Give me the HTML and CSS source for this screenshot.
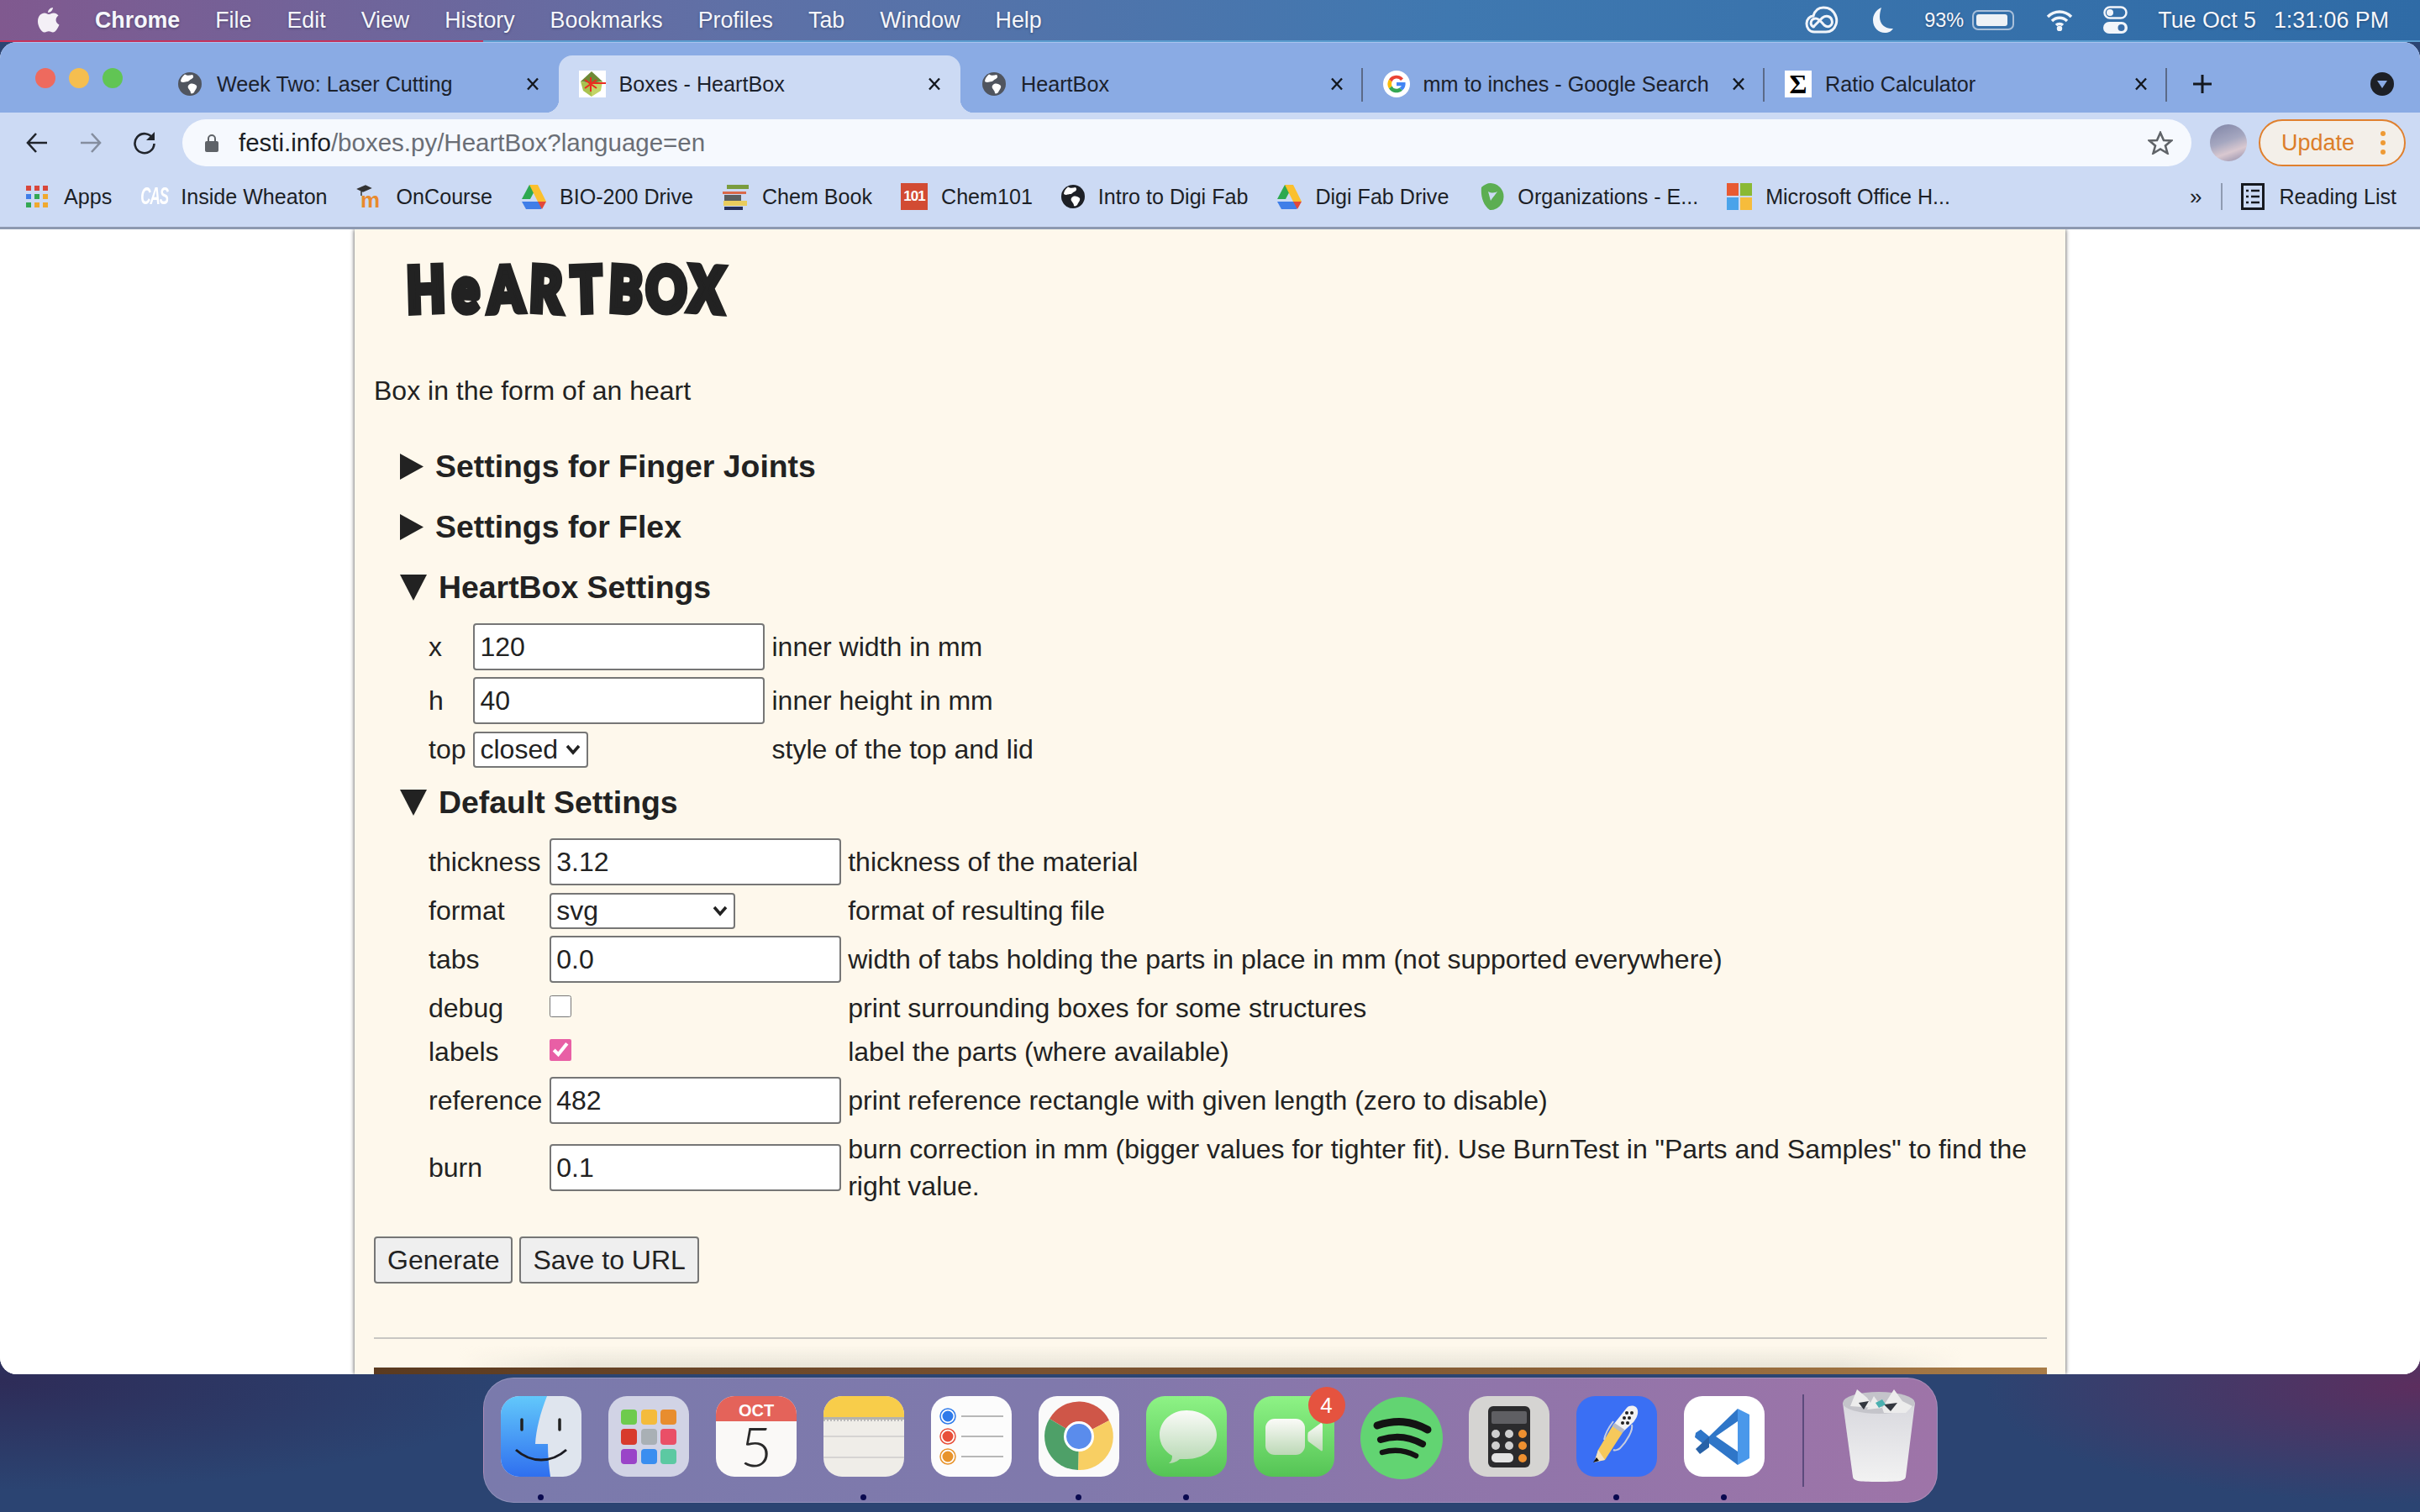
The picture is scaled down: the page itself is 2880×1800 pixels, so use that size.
FILE: index.html
```html
<!DOCTYPE html>
<html lang="en">
<head>
<meta charset="UTF-8">
<title>Boxes - HeartBox</title>
<link rel="stylesheet" href="styles.css">
</head>
<body>
<svg class="defs" aria-hidden="true">
  <symbol id="globe" viewBox="0 0 28 28">
    <circle cx="14" cy="14" r="14" fill="currentColor"/>
    <path d="M8 2.500c3 2 6 1 9 .5 2 2 1 4-1 5-3 1-3 3-5 3S6 13 3 11c0-3 2-6 5-8.500zM14 14c3-1 6 0 8 2 1 3-2 5-3 8-1 1-3 2-4 1 0-3-2-4-3-6-1-2 0-4 2-5z" fill="#fff"/>
  </symbol>
  <symbol id="drive" viewBox="0 0 30 32">
    <polygon points="10,2 20,2 11,19 1,19" fill="#2da94f"/>
    <polygon points="10,2 20,2 30,22 20,22" fill="#fbc02d"/>
    <polygon points="1,22 29,22 24,31 6,31" fill="#3f7ee8"/>
    <polygon points="20,22 30,22 25,31" fill="#e2483a"/>
  </symbol>
  <symbol id="close" viewBox="0 0 18 16">
    <path d="M3 1.500l12 13M15 1.500l-12 13" stroke="#14181f" stroke-width="2.400" fill="none"/>
  </symbol>
</svg>

<header class="menubar">
  <svg class="apple" width="26" height="32" viewBox="0 0 26 32"><path d="M18 1c0 3-3 6-6 6 0-3 3-6 6-6zM13 9c2 0 3-1.500 6-1.500 2 0 4 1 5.500 3-4.500 3-3.500 9 1 11-1.500 4-4.500 9-7.500 9-2 0-3-1.200-5-1.200s-3 1.200-5 1.200C4 30.500 0 23 0 17.500 0 11 4 7.500 8 7.500c2 0 3.500 1.500 5 1.500z" fill="#f4f0f6"/></svg>
  <span class="menu-app">Chrome</span>
  <span>File</span><span>Edit</span><span>View</span><span>History</span><span>Bookmarks</span><span>Profiles</span><span>Tab</span><span>Window</span><span>Help</span>
  <div class="status">
    <svg width="40" height="34" viewBox="0 0 40 34" fill="none" stroke="#f2f5fa" stroke-width="3"><path d="M11 31C5 31 2 26 2 21c0-5 4-9 8-9 2-7 7-10 12-10 8 0 13 5 15 11 1 3 1 6 0 9-2 6-6 9-12 9z"/><path d="M10 25c-5-3-3-10 3-10 4 0 7 5 10 8 5 4 11 0 9-6-1-5-7-6-11-3l-9 9c-2 2-1 2-2 2z"/></svg>
    <svg width="26" height="32" viewBox="0 0 26 32"><path d="M11 1C4 4 1 10 1 16c0 9 7 15 14 15 5 0 8-2 10-5-9 1-16-5-16-14 0-4 1-8 2-11z" fill="#f2f5fa"/></svg>
    <div class="battery-wrap">
      <span class="percent">93%</span>
      <span class="battery"><span class="battery-fill"></span></span>
    </div>
    <svg width="32" height="26" viewBox="0 0 32 26" fill="none" stroke="#f2f5fa" stroke-width="3.500"><path d="M2 9c8-8 20-8 28 0M7 14c5-5 13-5 18 0M12 19c2-2 6-2 8 0"/><circle cx="16" cy="23" r="1.500" fill="#f2f5fa"/></svg>
    <svg width="29" height="34" viewBox="0 0 29 34"><rect x="1.500" y="1.500" width="26" height="13" rx="6.500" fill="none" stroke="#f2f5fa" stroke-width="2.500"/><circle cx="8" cy="8" r="4" fill="#f2f5fa"/><rect y="19" width="29" height="14" rx="7" fill="#f2f5fa"/><circle cx="21.500" cy="26" r="4" fill="#3a6ea8"/></svg>
    <span class="clock"><span class="clock-date">Tue Oct 5</span>1:31:06 PM</span>
  </div>
</header>

<div class="window">
  <div class="tabstrip">
    <div class="lights"><i class="light red"></i><i class="light yellow"></i><i class="light green"></i></div>
    <div class="tab">
      <span class="favicon"><svg class="globe-icon" width="28" height="28"><use href="#globe"/></svg></span>
      <span class="tab-title">Week Two: Laser Cutting</span>
      <svg class="tab-close" width="18" height="16"><use href="#close"/></svg>
    </div>
    <div class="tab tab-active">
      <span class="favicon"><svg width="32" height="32" viewBox="0 0 32 32"><rect width="32" height="32" fill="#fff"/><polygon points="15,1 28,13 15,15 2,13" fill="#6f8a35"/><polygon points="2,13 15,15 15,31 5,24" fill="#a9c24e"/><polygon points="28,13 15,15 15,31 26,24" fill="#c3d466"/><path d="M14 8v17M7 11l14 10M7 21l14-10M12 15h20" stroke="#ea2b20" stroke-width="2"/></svg></span>
      <span class="tab-title">Boxes - HeartBox</span>
      <svg class="tab-close" width="18" height="16"><use href="#close"/></svg>
    </div>
    <div class="tab tab-sep">
      <span class="favicon"><svg class="globe-icon" width="28" height="28"><use href="#globe"/></svg></span>
      <span class="tab-title">HeartBox</span>
      <svg class="tab-close" width="18" height="16"><use href="#close"/></svg>
    </div>
    <div class="tab tab-sep">
      <span class="favicon"><svg width="32" height="32" viewBox="0 0 32 32"><circle cx="16" cy="16" r="16" fill="#fff"/><path d="M24 9.500A10.500 10.500 0 0 0 7 10.500l3.500 3A6 6 0 0 1 21 12z" fill="#ea4335"/><path d="M7 10.500a10.500 10.500 0 0 0 0 11l3.500-3a6 6 0 0 1 0-5z" fill="#fbbc05"/><path d="M7 21.500a10.500 10.500 0 0 0 16 2l-3.500-3a6 6 0 0 1-9-2z" fill="#34a853"/><path d="M26.500 14H16v4.200h6a5.500 5.500 0 0 1-2.500 2.300l3.500 3c3-2.500 4-6 3.500-9.500z" fill="#4285f4"/></svg></span>
      <span class="tab-title">mm to inches - Google Search</span>
      <svg class="tab-close" width="18" height="16"><use href="#close"/></svg>
    </div>
    <div class="tab tab-sep">
      <span class="favicon"><span class="sigma">Σ</span></span>
      <span class="tab-title">Ratio Calculator</span>
      <svg class="tab-close" width="18" height="16"><use href="#close"/></svg>
    </div>
    <svg class="new-tab" width="26" height="26" viewBox="0 0 26 26"><path d="M13 2v22M2 13h22" stroke="#14181f" stroke-width="3"/></svg>
    <span class="tab-menu"><svg width="14" height="10" viewBox="0 0 14 10"><polygon points="1,1 13,1 7,10" fill="#8aabe4"/></svg></span>
  </div>

  <div class="toolbar">
    <div class="navrow">
      <svg width="28" height="28" viewBox="0 0 28 28" fill="none" stroke="#20242b" stroke-width="2.600"><path d="M26 14H3M13 3L3 14l10 11"/></svg>
      <svg width="28" height="28" viewBox="0 0 28 28" fill="none" stroke="#858e9f" stroke-width="2.600"><path d="M2 14h23M15 3l10 11-10 11"/></svg>
      <svg width="28" height="28" viewBox="0 0 28 28" fill="none" stroke="#20242b" stroke-width="2.600"><path d="M24 9a11.500 11.500 0 1 0 1.500 6"/><polygon points="26,1 26,11 16,11" fill="#20242b" stroke="none"/></svg>
      <div class="omnibox">
        <svg class="lock" width="16" height="22" viewBox="0 0 16 22"><path d="M4 10V6a4 4 0 0 1 8 0v4" fill="none" stroke="#5f6368" stroke-width="2"/><rect y="9" width="16" height="13" rx="2" fill="#5f6368"/></svg>
        <span class="url"><span class="url-host">festi.info</span>/boxes.py/HeartBox?language=en</span>
        <svg class="star" width="30" height="28" viewBox="0 0 30 28"><polygon points="15,2 19,11 28,11.500 21,17.500 23.500,26.500 15,21.500 6.500,26.500 9,17.500 2,11.500 11,11" fill="none" stroke="#5f6368" stroke-width="2.600"/></svg>
      </div>
      <span class="avatar"></span>
      <div class="update"><span>Update</span><span class="update-dots"><i></i><i></i><i></i></span></div>
    </div>
    <div class="bookmarks">
      <div class="bm bm-apps"><svg width="26" height="26" viewBox="0 0 26 26"><rect width="6" height="6" fill="#d8473b"/><rect x="10" width="6" height="6" fill="#d8473b"/><rect x="20" width="6" height="6" fill="#d8473b"/><rect y="10" width="6" height="6" fill="#3f7ee8"/><rect x="10" y="10" width="6" height="6" fill="#34a853"/><rect x="20" y="10" width="6" height="6" fill="#f0a92f"/><rect y="20" width="6" height="6" fill="#34a853"/><rect x="10" y="20" width="6" height="6" fill="#f0a92f"/><rect x="20" y="20" width="6" height="6" fill="#f0a92f"/></svg>Apps</div>
      <div class="bm"><span class="cas">CAS</span>Inside Wheaton</div>
      <div class="bm"><svg width="32" height="32" viewBox="0 0 32 32"><text class="moodle" x="5" y="29">m</text><path d="M2 7l9-4 6 3-9 4zM6 9v6" fill="#333" stroke="#333" stroke-width="1.500"/></svg>OnCourse</div>
      <div class="bm"><svg width="30" height="32"><use href="#drive"/></svg>BIO-200 Drive</div>
      <div class="bm"><svg width="32" height="32" viewBox="0 0 32 32"><rect x="6" y="2" width="26" height="5" fill="#7a9c3e"/><rect x="1" y="10" width="28" height="3" fill="#d9694a"/><rect x="3" y="14" width="20" height="7" fill="#5a5f60"/><rect x="2" y="21" width="28" height="6" fill="#e9cc5e"/><rect x="3" y="28" width="22" height="4" fill="#27305a"/></svg>Chem Book</div>
      <div class="bm"><span class="chem101">101</span>Chem101</div>
      <div class="bm"><svg class="globe-black" width="28" height="28"><use href="#globe"/></svg>Intro to Digi Fab</div>
      <div class="bm"><svg width="30" height="32"><use href="#drive"/></svg>Digi Fab Drive</div>
      <div class="bm"><svg width="32" height="32" viewBox="0 0 32 32"><path d="M16 0a16 16 0 1 1-1 32C7 26 4 16 5 5 8 2 12 0 16 0zM13 10c1 4 2 7 3 11 2-3 6-8 8-11-4 2-7 2-11 0z" fill="#5cae52" fill-rule="evenodd"/></svg>Organizations - E...</div>
      <div class="bm"><svg width="30" height="32" viewBox="0 0 30 32"><rect width="14" height="15" fill="#e85a32"/><rect x="16" width="14" height="15" fill="#8ab934"/><rect y="17" width="14" height="15" fill="#4aa3ea"/><rect x="16" y="17" width="14" height="15" fill="#f6bc3c"/></svg>Microsoft Office H...</div>
      <span class="bm-more">»</span>
      <span class="bm-sep"></span>
      <div class="bm bm-reading"><svg width="28" height="32" viewBox="0 0 28 32"><rect x="1.500" y="1.500" width="25" height="29" fill="none" stroke="#16191f" stroke-width="3"/><path d="M6 9h3M12 9h10M6 16h3M12 16h10M6 23h3M12 23h10" stroke="#16191f" stroke-width="2.500"/></svg>Reading List</div>
    </div>
  </div>

  <main class="content">
    <div class="page">
      <h1 class="title"><span>H</span><span>e</span><span>A</span><span>R</span><span>T</span><span>B</span><span>O</span><span>X</span></h1>
      <p class="intro">Box in the form of an heart</p>
      <form>
        <details class="group">
          <summary><svg class="arrow" width="28" height="31" viewBox="0 0 28 31"><polygon points="0,0 28,15.500 0,31" fill="#222"/></svg>Settings for Finger Joints</summary>
        </details>
        <details class="group">
          <summary><svg class="arrow" width="28" height="31" viewBox="0 0 28 31"><polygon points="0,0 28,15.500 0,31" fill="#222"/></svg>Settings for Flex</summary>
        </details>
        <details class="group" open>
          <summary><svg class="arrow" width="32" height="31" viewBox="0 0 32 31"><polygon points="0,0 32,0 16,31" fill="#222"/></svg>HeartBox Settings</summary>
          <table class="settings">
            <tr><td>x</td><td><input class="field" type="text" value="120"></td><td>inner width in mm</td></tr>
            <tr><td>h</td><td><input class="field" type="text" value="40"></td><td>inner height in mm</td></tr>
            <tr><td>top</td><td><select class="pick pick-top"><option>closed</option></select></td><td>style of the top and lid</td></tr>
          </table>
        </details>
        <details class="group" open>
          <summary><svg class="arrow" width="32" height="31" viewBox="0 0 32 31"><polygon points="0,0 32,0 16,31" fill="#222"/></svg>Default Settings</summary>
          <table class="settings">
            <tr><td>thickness</td><td><input class="field" type="text" value="3.12"></td><td>thickness of the material</td></tr>
            <tr><td>format</td><td><select class="pick pick-wide"><option>svg</option></select></td><td>format of resulting file</td></tr>
            <tr><td>tabs</td><td><input class="field" type="text" value="0.0"></td><td>width of tabs holding the parts in place in mm (not supported everywhere)</td></tr>
            <tr><td>debug</td><td><input class="check" type="checkbox"></td><td>print surrounding boxes for some structures</td></tr>
            <tr><td>labels</td><td><input class="check" type="checkbox" checked></td><td>label the parts (where available)</td></tr>
            <tr><td>reference</td><td><input class="field" type="text" value="482"></td><td>print reference rectangle with given length (zero to disable)</td></tr>
            <tr><td>burn</td><td><input class="field" type="text" value="0.1"></td><td>burn correction in mm (bigger values for tighter fit). Use BurnTest in "Parts and Samples" to find the right value.</td></tr>
          </table>
        </details>
        <div class="actions">
          <button type="button">Generate</button>
          <button type="button">Save to URL</button>
        </div>
      </form>
      <hr class="rule">
      <div class="banner"></div>
    </div>
  </main>
</div>

<footer class="dock">
  <div class="dock-item">
    <svg width="96" height="96" viewBox="0 0 96 96"><defs><linearGradient id="fb" x1="0" y1="0" x2="0" y2="1"><stop offset="0" stop-color="#62c8fb"/><stop offset="1" stop-color="#2f6fef"/></linearGradient></defs><rect width="96" height="96" rx="22" fill="#dfe5ee"/><path d="M22 0h33C47 20 42 40 41 57h15c0 13 1 26 3 39H22A22 22 0 0 1 0 74V22A22 22 0 0 1 22 0z" fill="url(#fb)"/><path d="M25 28v12M70 28v12" stroke="#222" stroke-width="3.500" stroke-linecap="round"/><path d="M18 64c18 16 42 16 60 0" fill="none" stroke="#1b1b22" stroke-width="3"/></svg>
    <i class="dock-dot"></i>
  </div>
  <div class="dock-item">
    <svg width="96" height="96" viewBox="0 0 96 96"><rect width="96" height="96" rx="22" fill="#d1d3e5"/><rect x="15" y="16" width="19" height="18" rx="4" fill="#6ecb4d"/><rect x="39" y="16" width="19" height="18" rx="4" fill="#f4bb3c"/><rect x="62" y="16" width="19" height="18" rx="4" fill="#e88d2e"/><rect x="15" y="39" width="19" height="19" rx="4" fill="#d83a2c"/><rect x="39" y="39" width="19" height="19" rx="4" fill="#a9b0b5"/><rect x="62" y="39" width="19" height="19" rx="4" fill="#ea4f67"/><rect x="15" y="63" width="19" height="18" rx="4" fill="#9a44c8"/><rect x="39" y="63" width="19" height="18" rx="4" fill="#3a8ef0"/><rect x="62" y="63" width="19" height="18" rx="4" fill="#5cc9a2"/></svg>
    <i class="dock-none"></i>
  </div>
  <div class="dock-item">
    <svg width="96" height="96" viewBox="0 0 96 96"><rect width="96" height="96" rx="22" fill="#faf9f7"/><path d="M22 0h52a22 22 0 0 1 22 22v8H0v-8A22 22 0 0 1 22 0z" fill="#e4635a"/><text class="cal-month" x="48" y="24" text-anchor="middle">OCT</text><text class="cal-day" x="48" y="84" text-anchor="middle">5</text></svg>
    <i class="dock-none"></i>
  </div>
  <div class="dock-item">
    <svg width="96" height="96" viewBox="0 0 96 96"><rect width="96" height="96" rx="22" fill="#efede8"/><path d="M22 0h52a22 22 0 0 1 22 22v3H0v-3A22 22 0 0 1 22 0z" fill="#f8cd4a"/><rect y="25" width="96" height="3" fill="#b5b3ac"/><path d="M0 29h96" stroke="#bbb" stroke-width="2" stroke-dasharray="2 2"/><path d="M0 48h96M0 73h96" stroke="#d6d4d2" stroke-width="2"/></svg>
    <i class="dock-dot"></i>
  </div>
  <div class="dock-item">
    <svg width="96" height="96" viewBox="0 0 96 96" fill="none"><rect width="96" height="96" rx="22" fill="#fcfcfc"/><circle cx="20" cy="24" r="7.500" fill="#2f7bea" stroke="#fff" stroke-width="2"/><circle cx="20" cy="24" r="9" stroke="#2f7bea" stroke-width="1.500"/><circle cx="20" cy="48" r="7.500" fill="#e8503a" stroke="#fff" stroke-width="2"/><circle cx="20" cy="48" r="9" stroke="#e8503a" stroke-width="1.500"/><circle cx="20" cy="72" r="7.500" fill="#e8942c" stroke="#fff" stroke-width="2"/><circle cx="20" cy="72" r="9" stroke="#e8942c" stroke-width="1.500"/><path d="M36 24h50M36 48h50M36 72h50" stroke="#b8b8b8" stroke-width="2"/></svg>
    <i class="dock-none"></i>
  </div>
  <div class="dock-item">
    <svg width="96" height="96" viewBox="0 0 96 96"><rect width="96" height="96" rx="22" fill="#fafafa"/><path d="M48 48L13 27A40 40 0 0 1 84 29z" fill="#cf5648"/><path d="M48 48L84 29A40 40 0 0 1 47 88z" fill="#f8cf63"/><path d="M48 48L47 88A40 40 0 0 1 13 27z" fill="#4ea068"/><circle cx="48" cy="48" r="18" fill="#fff"/><circle cx="48" cy="48" r="15" fill="#5a8cec"/></svg>
    <i class="dock-dot"></i>
  </div>
  <div class="dock-item">
    <svg width="96" height="96" viewBox="0 0 96 96"><defs><linearGradient id="mg" x1="0" y1="0" x2="0" y2="1"><stop offset="0" stop-color="#8ef386"/><stop offset="1" stop-color="#55c455"/></linearGradient><linearGradient id="mb" x1="0" y1="0" x2="0" y2="1"><stop offset="0" stop-color="#fafbf8"/><stop offset="1" stop-color="#b6d8b2"/></linearGradient></defs><rect width="96" height="96" rx="22" fill="url(#mg)"/><path d="M48 17c20 0 36 13 36 29 0 17-16 29-36 29-3 0-5 0-8 0-4 4-10 5-13 5 3-2 4-5 4-9-9-5-15-14-15-25 0-16 14-29 32-29z" fill="url(#mb)"/></svg>
    <i class="dock-dot"></i>
  </div>
  <div class="dock-item">
    <svg width="96" height="96" viewBox="0 0 96 96"><defs><linearGradient id="fg" x1="0" y1="0" x2="0" y2="1"><stop offset="0" stop-color="#8ef386"/><stop offset="1" stop-color="#55c455"/></linearGradient><linearGradient id="fc" x1="0" y1="0" x2="0" y2="1"><stop offset="0" stop-color="#fbfbf8"/><stop offset="1" stop-color="#bcd8b6"/></linearGradient></defs><rect width="96" height="96" rx="22" fill="url(#fg)"/><rect x="14" y="27" width="47" height="43" rx="11" fill="url(#fc)"/><path d="M65 43l15-11c1 0 2 1 2 2v30c0 1-1 2-2 1L65 54c-1-1-1-10 0-11z" fill="url(#fc)"/></svg>
    <i class="dock-none"></i>
    <span class="dock-badge">4</span>
  </div>
  <div class="dock-item">
    <svg width="98" height="100" viewBox="0 0 98 100" fill="none" stroke="#131313" stroke-linecap="round"><circle cx="49" cy="50" r="49" fill="#62d472" stroke="none"/><path d="M20 35c22-7 40-6 60 5" stroke-width="9"/><path d="M24 52c18-6 34-4 50 5" stroke-width="8"/><path d="M26 67c14-4 27-3 40 4" stroke-width="6.500"/></svg>
    <i class="dock-none"></i>
  </div>
  <div class="dock-item">
    <svg width="96" height="96" viewBox="0 0 96 96"><rect width="96" height="96" rx="22" fill="#d5d4d2"/><rect x="23" y="12" width="50" height="73" rx="6" fill="#2b2b2d"/><rect x="27" y="18" width="42" height="15" rx="2" fill="#5f5f63"/><circle cx="32" cy="45" r="5" fill="#cfcfcf"/><circle cx="48" cy="45" r="5" fill="#cfcfcf"/><circle cx="64" cy="45" r="5" fill="#ee9030"/><circle cx="32" cy="59" r="5" fill="#cfcfcf"/><circle cx="48" cy="59" r="5" fill="#cfcfcf"/><circle cx="64" cy="59" r="5" fill="#ee9030"/><rect x="27" y="68" width="26" height="11" rx="5" fill="#e3e3e3"/><circle cx="64" cy="74" r="5" fill="#ee9030"/></svg>
    <i class="dock-none"></i>
  </div>
  <div class="dock-item">
    <svg width="96" height="96" viewBox="0 0 96 96"><rect width="96" height="96" rx="22" fill="#3a6ff4"/><path d="M56 42L34 76 22 78 26 64 44 34z" fill="#f6c95b"/><polygon points="26,64 34,76 21,79" fill="#f4e2bd"/><polygon points="24,73 27,77 20,79" fill="#111"/><path d="M44 34l16-20c4-4 12-3 13 3 1 5-2 10-5 14L56 42z" fill="#f2f2f2"/><path d="M44 34l12 8" stroke="#b9bcc4" stroke-width="5"/><path d="M44 30C38 38 34 46 33 52M66 34c2 6-6 20-14 28-2 2-6 3-8 2" fill="none" stroke="#c6cde0" stroke-width="2"/><circle cx="60" cy="20" r="2" fill="#222"/><circle cx="66" cy="20" r="2" fill="#222"/><circle cx="57" cy="26" r="2" fill="#222"/><circle cx="63" cy="26" r="2" fill="#222"/><circle cx="55" cy="32" r="2" fill="#222"/><circle cx="61" cy="32" r="2" fill="#222"/></svg>
    <i class="dock-dot"></i>
  </div>
  <div class="dock-item">
    <svg width="96" height="96" viewBox="0 0 96 96"><rect width="96" height="96" rx="22" fill="#fff"/><path d="M64 15L78 22v52l-14 8z" fill="#4a98ea"/><path d="M64 15L30 48 20 40 14 44l0 0 50 38v-16L38 48l26-18z" fill="#2f76c8"/><path d="M14 44l-1 5 10 8 7-8-10-9z" fill="#2f76c8"/><path d="M30 48L14 63l5 6 11-8z" fill="#2862a8"/></svg>
    <i class="dock-dot"></i>
  </div>
  <span class="dock-sep"></span>
  <div class="dock-trash">
    <svg width="90" height="112" viewBox="0 0 90 112"><defs><linearGradient id="tg" x1="0" y1="0" x2="0" y2="1"><stop offset="0" stop-color="#d8d8de"/><stop offset="1" stop-color="#f2f2f2"/></linearGradient></defs><path d="M1 18h86L76 106c-1 5-6 6-32 6s-30-1-31-6z" fill="url(#tg)"/><ellipse cx="44" cy="18" rx="43" ry="13" fill="#c4c4ca"/><path d="M10 22l8-20 12 10 8 12zM30 26l8-16 10 14zM48 24l14-22 10 14 12 6-8 8H50z" fill="#ececec"/><path d="M20 18l6 8 6-10zM50 20l8 8 8-10z" fill="#33373f"/><path d="M40 18l8-4 4 6-8 4z" fill="#4ab0b0"/></svg>
  </div>
</footer>
</body>
</html>
```

FILE: styles.css
```css
* {
  box-sizing: border-box;
}
html, body {
  margin: 0;
  height: 1800px;
  overflow: hidden;
}
body {
  width: 2880px;
  font-family: "Liberation Sans", Arial, sans-serif;
  color: #1c1f26;
  background:
    radial-gradient(ellipse 520px 140px at 100% 1650px, #5c2e5e, transparent),
    radial-gradient(ellipse 620px 130px at 0 1645px, #2e2c58, transparent),
    #2b4472;
}
.defs {
  position: absolute;
  width: 0;
  height: 0;
}

/* menu bar */
.menubar {
  height: 50px;
  display: flex;
  align-items: center;
  gap: 42px;
  padding: 0 37px 0 45px;
  border-bottom: 2px solid;
  border-image: linear-gradient(90deg, #c4335c 20%, #5a9ccf 20%) 1;
  background: linear-gradient(90deg, #80598f 0%, #5f70a6 30%, #3f78b0 60%, #2f6ba6 100%);
  color: #f6f7fb;
  font-size: 26.8px;
  text-shadow: 0 1px 3px rgba(20, 30, 60, .45);
}
.menu-app {
  font-weight: bold;
}
.status {
  margin-left: auto;
  display: flex;
  align-items: center;
  gap: 36px;
}
.status > svg:first-child {
  margin-right: 4px;
}
.battery-wrap {
  display: flex;
  align-items: center;
  gap: 10px;
  margin-right: 2px;
}
.percent {
  font-size: 23.5px;
}
.battery {
  width: 50px;
  height: 24px;
  padding: 3px;
  border: 2px solid #a9c0da;
  border-radius: 7px;
}
.battery-fill {
  display: block;
  height: 100%;
  width: 92%;
  border-radius: 3px;
  background: #eef2f6;
}
.clock-date {
  margin-right: 21px;
}

/* browser window */
.window {
  height: 1586px;
  display: flex;
  flex-direction: column;
  overflow: hidden;
  border-radius: 20px;
  background: #fff;
}
.tabstrip {
  height: 84px;
  flex: none;
  display: flex;
  align-items: center;
  padding-left: 42px;
  background: #8aabe4;
  border-top: 1px solid #a9c3ee;
}
.lights {
  width: 144px;
  flex: none;
  display: flex;
  gap: 16px;
}
.light {
  width: 24px;
  height: 24px;
  border-radius: 50%;
}
.light.red { background: #ee6a5e; }
.light.yellow { background: #f5be4f; }
.light.green { background: #61c554; }
.tab {
  position: relative;
  width: 478.5px;
  height: 68px;
  align-self: flex-end;
  flex: none;
  display: flex;
  align-items: center;
  gap: 16px;
  padding: 0 22px 0 24px;
  font-size: 25.2px;
  color: #1b212c;
}
.tab-active {
  background: #ccdaf4;
  border-radius: 16px 16px 0 0;
}
.tab-active::before,
.tab-active::after {
  content: "";
  position: absolute;
  bottom: 0;
  width: 16px;
  height: 16px;
}
.tab-active::before {
  left: -16px;
  background: radial-gradient(circle at 0 0, transparent 16px, #ccdaf4 16.5px);
}
.tab-active::after {
  right: -16px;
  background: radial-gradient(circle at 100% 0, transparent 16px, #ccdaf4 16.5px);
}
.tab-sep::after {
  content: "";
  position: absolute;
  right: 0;
  top: 15px;
  width: 2px;
  height: 40px;
  background: #5b6a88;
}
.favicon {
  width: 32px;
  height: 32px;
  flex: none;
  display: flex;
  align-items: center;
  justify-content: center;
}
.globe-icon {
  color: #50555f;
}
.tab-title {
  flex: 1;
  white-space: nowrap;
}
.tab-close {
  flex: none;
}
.sigma {
  width: 32px;
  height: 32px;
  background: #fff;
  color: #000;
  font: bold 32px/32px "Liberation Serif", serif;
  text-align: center;
}
.new-tab {
  margin-left: 29px;
  margin-top: 14px;
  flex: none;
}
.tab-menu {
  width: 28px;
  height: 28px;
  margin-left: 187px;
  margin-top: 14px;
  flex: none;
  display: flex;
  align-items: center;
  justify-content: center;
  border-radius: 50%;
  background: #1d2026;
}

/* toolbar */
.toolbar {
  flex: none;
  height: 139px;
  padding-top: 8px;
  background: #ccdaf4;
  border-bottom: 3px solid #8d99b0;
}
.navrow {
  height: 56px;
  display: flex;
  align-items: center;
  gap: 36px;
  padding: 0 17px 0 30px;
}
.omnibox {
  flex: 1;
  height: 56px;
  margin-left: -5px;
  display: flex;
  align-items: center;
  padding: 0 22px 0 27px;
  border-radius: 28px;
  background: #f6f9fe;
}
.lock {
  margin-right: 24px;
}
.url {
  flex: 1;
  font-size: 29.5px;
  color: #6a6e76;
}
.url-host {
  color: #1c1f26;
}
.avatar {
  width: 44px;
  height: 44px;
  margin: 0 -22px 0 -14px;
  border-radius: 50%;
  background: linear-gradient(160deg, #7f84a6 0%, #a5a7c0 45%, #d9c8d0 70%, #8d8aa8 100%);
}
.update {
  width: 175px;
  height: 56px;
  display: flex;
  align-items: center;
  justify-content: space-between;
  padding: 0 22px 0 25px;
  border: 2px solid #e0802e;
  border-radius: 28px;
  background: #f3efe9;
  color: #dc7e2a;
  font-size: 27px;
}
.update-dots {
  display: flex;
  flex-direction: column;
  gap: 5px;
}
.update-dots i {
  width: 6px;
  height: 6px;
  border-radius: 50%;
  background: #ee9a35;
}
.bookmarks {
  height: 72px;
  display: flex;
  align-items: center;
  gap: 34px;
  padding: 0 28px 0 31px;
  font-size: 25.1px;
}
.bm {
  display: flex;
  align-items: center;
  gap: 16px;
  white-space: nowrap;
}
.bm-apps {
  gap: 19px;
}
.bm-reading {
  gap: 18px;
}
.cas {
  width: 32px;
  font: italic bold 17px/32px "Liberation Sans", sans-serif;
  letter-spacing: -1px;
  color: #fff;
  transform: scaleY(1.7);
}
.moodle {
  font: bold 26px "Liberation Sans", sans-serif;
  fill: #e88a2e;
}
.chem101 {
  width: 32px;
  height: 32px;
  background: #d24b33;
  color: #fff;
  font: bold 17px/32px "Liberation Sans", sans-serif;
  text-align: center;
  letter-spacing: -1px;
}
.globe-black {
  color: #1d2026;
}
.bm-more {
  margin-left: auto;
  font-size: 26px;
  margin-right: -12px;
}
.bm-sep {
  width: 2px;
  height: 32px;
  background: #8f9bb2;
  margin-right: -12px;
}

/* page */
.content {
  flex: 1;
  overflow: hidden;
  background: #fff;
}
.page {
  width: 2036px;
  height: 100%;
  margin: 0 auto;
  padding: 30px 22px 0 23px;
  background: #fef8ec;
  box-shadow: 0 0 5px #444;
  font-size: 32px;
  line-height: 44px;
  color: #222;
}
.title {
  display: flex;
  margin: 0 0 60px 38px;
  height: 80px;
  font: 900 74px/80px Lato, "Liberation Sans", sans-serif;
  color: #222;
  -webkit-text-stroke: 8px #222;
}
.title span {
  width: 47.700px;
  display: flex;
  justify-content: center;
  transform: scaleX(.8) rotate(-2deg);
}
.title span:nth-child(even) {
  transform: scaleX(.8) rotate(3deg);
}
.intro {
  margin: 0 0 46px;
}
.group {
  margin: 0 0 28px 31px;
}
.group[open] {
  margin-bottom: 13px;
}
.group summary {
  display: flex;
  align-items: center;
  gap: 14px;
  font-size: 37.4px;
  font-weight: bold;
  list-style: none;
}
.group summary::-webkit-details-marker {
  display: none;
}
.settings {
  margin: 15px 0 0 28px;
  border-spacing: 4px;
  width: 1928px;
}
.settings td {
  padding: 2px;
  vertical-align: middle;
}
.settings td:first-child {
  width: 1px;
  padding-right: 3px;
  white-space: nowrap;
}
.settings td:nth-child(2) {
  width: 347px;
}
.field {
  display: block;
  width: 347px;
  height: 56px;
  padding: 0 6px;
  border: 2px solid #767676;
  border-radius: 4px;
  background: #fff;
  font: 32px "Liberation Sans", sans-serif;
  color: #222;
}
.pick {
  display: block;
  height: 43px;
  padding: 0 30px 0 6px;
  border: 2px solid #767676;
  border-radius: 4px;
  appearance: none;
  background: #fff url("data:image/svg+xml,%3Csvg xmlns='http://www.w3.org/2000/svg' width='20' height='14'%3E%3Cpath d='M3 3l7 8 7-8' fill='none' stroke='%23222' stroke-width='3.500'/%3E%3C/svg%3E") no-repeat right 6px center;
  font: 32px "Liberation Sans", sans-serif;
  color: #222;
}
.pick-top {
  width: 137px;
}
.pick-wide {
  width: 221px;
}
.check {
  display: block;
  width: 26px;
  height: 26px;
  margin: 0 0 4px;
  accent-color: #e85fa5;
}
.actions {
  display: flex;
  gap: 8px;
  margin-top: 32px;
}
.actions button {
  height: 56px;
  padding: 0 14px;
  border: 2px solid #767676;
  border-radius: 4px;
  background: #efefef;
  font: 32px "Liberation Sans", sans-serif;
  color: #222;
}
.rule {
  height: 2px;
  margin: 64px 0 0;
  border: 0;
  background: #c8c6c2;
}
.banner {
  position: relative;
  height: 60px;
  margin-top: 34px;
  background: linear-gradient(90deg, #5a3a20, #7a5230 40%, #7c5430 55%, #956a3c 80%, #a87c48 100%);
}
.banner::before {
  content: "";
  position: absolute;
  left: 5%;
  right: 5%;
  bottom: 100%;
  height: 26px;
  background: linear-gradient(180deg, rgba(232, 228, 216, 0), #e8e4d8);
  -webkit-mask-image: linear-gradient(90deg, transparent, #000 8%, #000 92%, transparent);
}

/* dock */
.dock {
  width: 1731px;
  height: 149px;
  margin: 4px auto 0;
  display: flex;
  gap: 32px;
  padding: 21px 0 0 20px;
  border: 1px solid rgba(255, 255, 255, .18);
  border-radius: 36px;
  background: linear-gradient(90deg, #7a7aac 0%, #8079ac 40%, #9075aa 70%, #9e74a8 100%);
}
.dock-item {
  position: relative;
  width: 96px;
  display: flex;
  flex-direction: column;
  align-items: center;
}
.dock-item svg {
  flex: none;
}
.cal-month {
  font: bold 20px "Liberation Sans", sans-serif;
  fill: #fff;
}
.cal-day {
  font: 300 66px Lato, "Liberation Sans", sans-serif;
  fill: #2a2a2a;
}
.dock-dot,
.dock-none {
  width: 7px;
  height: 7px;
  margin-top: 21px;
  border-radius: 50%;
}
.dock-dot {
  background: #0a0a50;
}
.dock-badge {
  position: absolute;
  top: -11px;
  right: -13px;
  width: 44px;
  height: 44px;
  border-radius: 50%;
  background: #e5533f;
  color: #fff;
  font-size: 26px;
  line-height: 44px;
  text-align: center;
}
.dock-sep {
  width: 2px;
  height: 110px;
  margin: -2px 13px 0;
  background: #5c4a7c;
}
.dock-trash {
  margin-top: -10px;
}
```
